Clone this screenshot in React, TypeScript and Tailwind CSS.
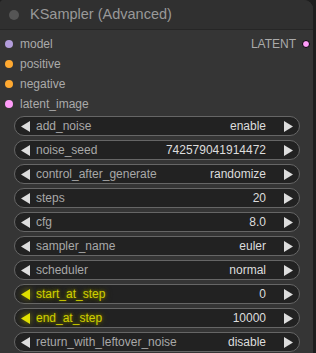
import React from 'react';

type Slot = { name: string; color: string };
type Widget = { name: string; value: string; hl?: boolean };

const inputs: Slot[] = [
  { name: 'model', color: '#b39ddb' },
  { name: 'positive', color: '#ffa931' },
  { name: 'negative', color: '#ffa931' },
  { name: 'latent_image', color: '#ff9cf9' },
];

const widgets: Widget[] = [
  { name: 'add_noise', value: 'enable' },
  { name: 'noise_seed', value: '742579041914472' },
  { name: 'control_after_generate', value: 'randomize' },
  { name: 'steps', value: '20' },
  { name: 'cfg', value: '8.0' },
  { name: 'sampler_name', value: 'euler' },
  { name: 'scheduler', value: 'normal' },
  { name: 'start_at_step', value: '0', hl: true },
  { name: 'end_at_step', value: '10000', hl: true },
  { name: 'return_with_leftover_noise', value: 'disable' },
];

const Arrow = ({ dir, color }: { dir: 'l' | 'r'; color: string }) => (
  <svg width="10" height="11" viewBox="0 0 10 11" className="shrink-0">
    <polygon points={dir === 'l' ? '9,0 9,11 0,5.5' : '1,0 1,11 10,5.5'} fill={color} />
  </svg>
);

const WidgetRow = ({ w }: { w: Widget }) => (
  <div className="h-[20px] flex items-center rounded-full border border-[#666] bg-[#222] pl-[6px] pr-[6px] text-[12px]">
    <span className={w.hl ? '[filter:drop-shadow(0_0_3px_#8a8a00)]' : ''}>
      <Arrow dir="l" color={w.hl ? '#e0e000' : '#dddddd'} />
    </span>
    <span
      className={`ml-[5px] whitespace-nowrap overflow-hidden flex-1 min-w-0 ${
        w.hl ? 'text-[#cfcf00] [text-shadow:0_0_3px_#707000,0_0_5px_#5a5a00,0_0_7px_#454500]' : 'text-[#a8a8a8]'
      }`}
    >
      {w.name}
    </span>
    <span className="ml-[6px] text-[#dddddd] whitespace-nowrap mr-[17px]">{w.value}</span>
    <Arrow dir="r" color="#dddddd" />
  </div>
);

export default function App() {
  return (
    <div className="w-[316px] h-[353px] bg-[#1e1e1e] overflow-hidden font-['Liberation_Sans',Arial,sans-serif]">
      <div className="w-[313px] h-[360px] bg-[#353535] rounded-tr-[9px] rounded-tl-[4px] overflow-hidden">
        <div className="h-[30px] bg-[#303030] border-b border-[#262626] flex items-center">
          <div className="ml-[9px] w-[10px] h-[10px] rounded-full bg-[#555]" />
          <span className="ml-[11px] text-[14.5px] text-[#999]">KSampler (Advanced)</span>
        </div>
        <div className="pt-[4px] flex">
          <div className="flex-1 flex flex-col">
            {inputs.map((s) => (
              <div key={s.name} className="h-[20px] flex items-center">
                <div className="ml-[5px] w-[8px] h-[8px] rounded-full" style={{ background: s.color }} />
                <span className="ml-[7px] text-[12px] text-[#aaa]">{s.name}</span>
              </div>
            ))}
          </div>
          <div className="h-[20px] flex items-center">
            <span className="text-[12px] text-[#aaa]">LATENT</span>
            <div className="ml-[6px] mr-[3px] w-[8px] h-[8px] rounded-full bg-[#ff9cf9] border border-black" />
          </div>
        </div>
        <div className="pt-[2px] pl-[14px] pr-[13px] flex flex-col gap-[4px]">
          {widgets.map((w) => (
            <WidgetRow key={w.name} w={w} />
          ))}
        </div>
      </div>
    </div>
  );
}
